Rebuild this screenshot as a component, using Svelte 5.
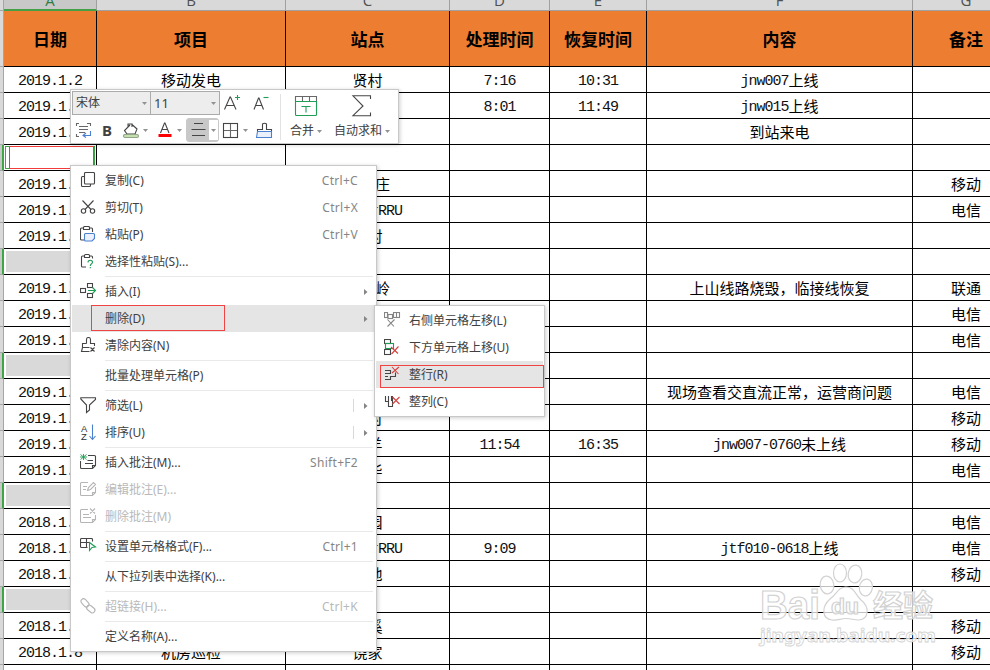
<script>
  const columns = [
    { letter: 'A', title: '日期' },
    { letter: 'B', title: '项目' },
    { letter: 'C', title: '站点' },
    { letter: 'D', title: '处理时间' },
    { letter: 'E', title: '恢复时间' },
    { letter: 'F', title: '内容' },
    { letter: 'G', title: '备注' }
  ];

  const rows = [
    ['2019.1.2', '移动发电', '贤村', '7:16', '10:31', 'jnw007上线', ''],
    ['2019.1.3', '', '', '8:01', '11:49', 'jnw015上线', ''],
    ['2019.1.3', '', '', '', '', '到站来电', ''],
    null,
    ['2019.1.4', '', '李家庄', '', '', '', '移动'],
    ['2019.1.4', '', '石家村RRU', '', '', '', '电信'],
    ['2019.1.4', '', '贤村', '', '', '', ''],
    null,
    ['2019.1.5', '', '分水岭', '', '', '上山线路烧毁，临接线恢复', '联通'],
    ['2019.1.5', '', '', '', '', '', '电信'],
    ['2019.1.5', '', '', '', '', '', '电信'],
    null,
    ['2019.1.6', '', '', '', '', '现场查看交直流正常，运营商问题', '电信'],
    ['2019.1.6', '', '上村', '', '', '', '移动'],
    ['2019.1.6', '', '青羊', '11:54', '16:35', 'jnw007-0760未上线', '移动'],
    ['2019.1.6', '', '新华', '', '', '', '电信'],
    null,
    ['2018.1.7', '', '桃园', '', '', '', '电信'],
    ['2018.1.7', '', '石家村RRU', '9:09', '', 'jtf010-0618上线', '电信'],
    ['2018.1.7', '', '基地', '', '', '', '移动'],
    null,
    ['2018.1.8', '', '兰溪', '', '', '', '移动'],
    ['2018.1.8', '机房巡检', '饶家', '', '', '', '移动'],
    ['', '', '', '', '', '', '']
  ];

  // Latin runs and Chinese runs have different advances in the sheet font.
  const runs = (s) => s.match(/[\x20-\x7e]+|[^\x20-\x7e]+/g) ?? [];

  const menu = [
    { label: '复制(C)', key: 'Ctrl+C', icon: 'copy' },
    { label: '剪切(T)', key: 'Ctrl+X', icon: 'cut' },
    { label: '粘贴(P)', key: 'Ctrl+V', icon: 'paste' },
    { label: '选择性粘贴(S)...', icon: 'special' },
    null,
    { label: '插入(I)', icon: 'insert', sub: true },
    { label: '删除(D)', sub: true, active: true },
    { label: '清除内容(N)', icon: 'clear' },
    null,
    { label: '批量处理单元格(P)' },
    null,
    { label: '筛选(L)', icon: 'filter', sub: true, split: true },
    { label: '排序(U)', icon: 'sort', sub: true, split: true },
    null,
    { label: '插入批注(M)...', key: 'Shift+F2', icon: 'note' },
    { label: '编辑批注(E)...', icon: 'editnote', off: true },
    { label: '删除批注(M)', icon: 'delnote', off: true },
    null,
    { label: '设置单元格格式(F)...', key: 'Ctrl+1', icon: 'format' },
    null,
    { label: '从下拉列表中选择(K)...' },
    null,
    { label: '超链接(H)...', key: 'Ctrl+K', icon: 'link', off: true },
    null,
    { label: '定义名称(A)...' }
  ];

  const submenu = [
    { label: '右侧单元格左移(L)', icon: 'left' },
    { label: '下方单元格上移(U)', icon: 'up' },
    { label: '整行(R)', icon: 'row', active: true },
    { label: '整列(C)', icon: 'col' }
  ];
</script>

{#snippet icon(name)}
  <svg class="ico" width="17" height="17" viewBox="0 0 17 17">
    {#if name === 'copy'}
      <path d="M4.5 4.5h-2a1 1 0 0 0-1 1v8a1 1 0 0 0 1 1h7a1 1 0 0 0 1-1v-1.500" />
      <rect x="4.500" y=".5" width="10" height="11.500" rx="1" />
    {:else if name === 'cut'}
      <path d="M2.500 1.500 11 10.500M13.500 1.500 5 10.500" />
      <circle cx="3.500" cy="12" r="2.200" /><circle cx="12.500" cy="12" r="2.200" />
    {:else if name === 'paste'}
      <path d="M3.500 2h-2a1 1 0 0 0-1 1v10a1 1 0 0 0 1 1h2.500M9.500 2h2a1 1 0 0 1 1 1v3M3.500 3.500v-2a1 1 0 0 1 1-1h4a1 1 0 0 1 1 1v2z" />
      <path class="blue pale" d="M5.500 7.500h8a1 1 0 0 1 1 1v4l-2.500 2.500H5.500a1 1 0 0 1-1-1v-5.500a1 1 0 0 1 1-1z" />
    {:else if name === 'special'}
      <path d="M4.500 3h-2a1 1 0 0 0-1 1v9a1 1 0 0 0 1 1h3.500M9.500 3h2a1 1 0 0 1 1 1v1.500M4.500 4.500V2.500a1 1 0 0 1 1-1h3a1 1 0 0 1 1 1v2z" />
      <path class="green" d="M8 9.500C8 6.500 12.500 6.700 12.500 9.200C12.500 11 10.300 10.500 10.300 13M10.300 14v1.300" />
    {:else if name === 'insert'}
      <rect x="7.500" y=".5" width="5" height="4" /><rect x=".5" y="5.500" width="5" height="4" /><rect x="7.500" y="10.500" width="5" height="4" />
      <path class="green" d="M8 7.500h7M12.500 4.500l3 3-3 3" />
    {:else if name === 'clear'}
      <path d="M6.500 6.500V2.500q0-2 2-2t2 2v4h4v2.500M6.500 6.500h-4v4h7M2.500 10.500l-1 4h8M10.500 10.500l4 4M14.500 10.500l-4 4" />
    {:else if name === 'filter'}
      <path d="M.8 1.500V.7h14.700v1.800L9.500 8v5L6.500 15.500V8L.8 2z" />
    {:else if name === 'sort'}
      <text x="1" y="7.500">A</text><text x="1" y="16">Z</text>
      <path class="blue" d="M12.500.5v15M9.500 12l3 3.500 3-3.500" />
    {:else if name === 'note'}
      <path d="M8 1.500h6.500a1 1 0 0 1 1 1v9l-3 3h-11a1 1 0 0 1-1-1V7M12.500 14v-2.500h3M7.500 6.500h5.500M5 9.500h8" />
      <path class="green thin" d="M.5.500l6 5M6.500.500l-6 5M3.500 0v6M0 3h7" />
    {:else if name === 'editnote'}
      <path d="M8 1.500H1.500a1 1 0 0 0-1 1v11a1 1 0 0 0 1 1h11l3-3V6M12.500 14v-2.500h3M3 5.500h4M3 8.500h3M7.500 9.500l1-3 5-5 2 2-5 5z" />
    {:else if name === 'delnote'}
      <path d="M8 1.500H1.500a1 1 0 0 0-1 1v11a1 1 0 0 0 1 1h11l3-3V7M12.500 14v-2.500h3M3 6.500h6M3 9.500h8M10 .5l5 5M15 .5l-5 5" />
    {:else if name === 'format'}
      <path d="M7.500 9.500h-6a1 1 0 0 1-1-1v-7a1 1 0 0 1 1-1h10a1 1 0 0 1 1 1v2M.5 4.500h9M6.500.5v9" />
      <path class="green" d="M9.500 4.500l6 4.500-3.500.5-2.500 3z" />
    {:else if name === 'link'}
      <rect x="-4.600" y="-2.600" width="9.200" height="5.200" rx="2.600" transform="translate(5 4.800) rotate(48)" />
      <rect x="-4.600" y="-2.600" width="9.200" height="5.200" rx="2.600" transform="translate(10.800 11) rotate(40)" />
    {:else if name === 'left'}
      <g class="grey"><rect x=".5" y=".5" width="3" height="5" /><rect x="4" y="2.500" width="4.500" height="4" /><rect x="9.500" y=".5" width="6" height="5" /><path d="M12.500.5v5M3.500 7.500l6.500 7M10.500 7.500l-7 7" /></g>
    {:else if name === 'up'}
      <rect x=".5" y=".5" width="6" height="4" /><rect x=".5" y="10.500" width="6" height="5" />
      <rect class="green" x="1.500" y="4.500" width="8" height="5" />
      <path class="red" d="M7 8l7 6.500M14.500 7.500l-7 7.500" />
    {:else if name === 'row'}
      <path d="M1 4.500h5.500v3H1M1 13.500h5.500v-3h5v-4M1 10.500h3" />
      <path class="red" d="M8 1l6.500 7M15 1l-7 6" />
    {:else if name === 'col'}
      <path d="M1.500 3v5.500h3V3M4.500 8.500v5h4V3M7.500 3v5" />
      <path class="red" d="M8.500 4l7 7M15.500 4l-7 7" />
    {/if}
  </svg>
{/snippet}

{#snippet drop()}
  <svg class="drop" width="5" height="3" viewBox="0 0 5 3"><path d="M0 0h5L2.500 3z" /></svg>
{/snippet}

<div class="screen">
  <div class="sheet">
    <div class="line letters">
      <div class="gutter"></div>
      {#each columns as c, i}
        <div class="letter" class:picked={i === 0}><span>{c.letter}</span></div>
      {/each}
    </div>
    <div class="line titles">
      <div class="gutter"></div>
      {#each columns as c}
        <div class="cell title">{c.title}</div>
      {/each}
    </div>
    {#each rows as row, r}
      <div class="line" class:chosen={row === null}>
        <div class="gutter"></div>
        {#if row}
          {#each row as value}
            <div class="cell">{#each runs(value) as run}<span class:latin={/[\x20-\x7e]/.test(run)}>{run}</span>{/each}</div>
          {/each}
        {:else}
          <div class="cell first" class:current={r === 3}><i></i></div>
          {#each { length: 6 } as _}
            <div class="cell"></div>
          {/each}
        {/if}
      </div>
    {/each}
  </div>

  <svg class="watermark" width="190" height="104" viewBox="0 0 190 104">
    <ellipse cx="72" cy="35" rx="6.800" ry="9" transform="rotate(-8 72 35)" />
    <ellipse cx="85" cy="23" rx="6.500" ry="9" />
    <ellipse cx="100" cy="24" rx="6.800" ry="9" transform="rotate(8 100 24)" />
    <ellipse cx="111" cy="37.500" rx="6.500" ry="8.500" transform="rotate(10 111 37)" />
    <path d="M91 37c8 0 9 7 15 13 9 7 8 19-2 20-6 0-7-1.500-13-1.500s-8 2.500-14 1.500c-10-1-11-13-2-21 7-5 8-12 16-12z" />
    <text x="5" y="68.500" font-size="40" textLength="60" lengthAdjust="spacingAndGlyphs">Bai</text>
    <text x="76" y="64" font-size="22" textLength="28" lengthAdjust="spacingAndGlyphs">du</text>
    <text class="cn" x="118" y="66" font-size="30" textLength="60">经验</text>
    <text class="site" x="5" y="92" font-size="18" textLength="176" lengthAdjust="spacingAndGlyphs">jingyan.baidu.com</text>
  </svg>

  <div class="toolbar">
    <div class="tools">
      <div class="upper">
        <div class="combo name"><span>宋体</span>{@render drop()}</div>
        <div class="combo size"><span>11</span>{@render drop()}</div>
        <svg width="18" height="18" viewBox="0 0 18 18"><path d="M1.500 15.500 7 3h.500L13 15.500M3.500 11.500h7.500" /><path class="green" d="M12 3.500h5M14.500 1v5" /></svg>
        <svg class="smaller" width="17" height="18" viewBox="0 0 17 18"><path d="M1 15.500 5.500 4h.500L10.500 15.500M3 11.500h6" /><path class="green" d="M10.500 3.500h5" /></svg>
      </div>
      <div class="lower">
        <svg width="17" height="16" viewBox="0 0 17 16"><path class="soft" d="M4 1.500H1.500V4M12 1.500h3.500V4M4 14.500H1.500V12M4 4.500h9M4 7.500h9M4 10.500h6" /><path class="blue" d="M15.500 9v4.500H9M11 11l-3 2.500 3 2" /></svg>
        <b>B</b>
        <svg class="bucket" width="17" height="17" viewBox="0 0 17 17"><path d="M5 5.500V2h4v3M9 2.500l5 4.500-2 5H4L1.500 8.500 7 3M2 8.500h-1" /><rect class="pool" x=".5" y="12.500" width="15" height="3" rx="1.500" /></svg>
        {@render drop()}
        <svg class="color" width="14" height="16" viewBox="0 0 14 16"><path d="M2.500 11 6.500 1h.500L11 11M4 7.500h6" /><path class="ink" d="M.5 13.500h13" /></svg>
        {@render drop()}
        <div class="align">
          <svg width="22" height="20" viewBox="0 0 22 20"><path d="M7 3.500h9M4.500 9.500h14M5 15.500h13" /></svg>
          <div>{@render drop()}</div>
        </div>
        <svg class="borders" width="17" height="17" viewBox="0 0 17 17"><rect x="1.500" y="1.500" width="14" height="14" /><path class="soft" d="M8.500 2v13M2 8.500h13" /></svg>
        {@render drop()}
        <svg class="brush" width="17" height="17" viewBox="0 0 17 17"><path d="M1.500 9V7.500h5V2q2-1.500 4 0v5.500h5V9" /><path class="blue pale" d="M1.500 9.500h14v6H.5z" /></svg>
      </div>
    </div>
    <div class="rule"></div>
    <div class="big merge">
      <svg width="24" height="22" viewBox="0 0 24 22"><path class="soft" d="M1.500 1.500h21v5h-21zM8.500 2v4M15.500 2v4" /><path class="green" d="M1.500 6.500h21v13a1 1 0 0 1-1 1h-19a1 1 0 0 1-1-1zM7.500 11.500h9M12 11.500v6" /></svg>
      <div><span>合并</span>{@render drop()}</div>
    </div>
    <div class="big sum">
      <svg width="22" height="22" viewBox="0 0 22 22"><path d="M19.500 4V.8H2L12 11 2 20.700h17.500V17.500" /></svg>
      <div><span>自动求和</span>{@render drop()}</div>
    </div>
  </div>

  <div class="menu main">
    {#each menu as item}
      {#if item}
        <div class="item" class:active={item.active} class:off={item.off}>
          {#if item.icon}{@render icon(item.icon)}{:else}<div class="ico"></div>{/if}
          <span class="label">{item.label}</span>
          {#if item.key}<span class="key">{item.key}</span>{/if}
          {#if item.sub}<div class="more" class:split={item.split}><svg width="4" height="6" viewBox="0 0 4 6"><path d="M0 0l3.500 3L0 6z" /></svg></div>{/if}
          {#if item.active}<div class="frame"></div>{/if}
        </div>
      {:else}
        <div class="sep"></div>
      {/if}
    {/each}
  </div>

  <div class="menu sub">
    {#each submenu as item}
      <div class="item" class:active={item.active}>
        {@render icon(item.icon)}
        <span class="label">{item.label}</span>
        {#if item.active}<div class="frame"></div>{/if}
      </div>
    {/each}
  </div>
</div>

<style>
  .screen {
    position: relative;
    width: 990px;
    height: 670px;
    overflow: hidden;
    background: #fff;
    color: #000;
  }
  .sheet { width: 1020px; }
  .line {
    display: grid;
    grid-template-columns: 4px 93px 189px 164px 100px 97px 266px 107px;
    grid-template-rows: 100%;
    height: 26px;
  }
  .gutter {
    box-sizing: border-box;
    background: #d9d9d9;
    border-right: 1px solid #a6a6a6;
    border-bottom: 1px solid #a6a6a6;
  }
  .letters { height: 11px; }
  .letter {
    box-sizing: border-box;
    height: 11px;
    overflow: hidden;
    background: #d9d9d9;
    border-right: 1px solid #a0a0a0;
    border-bottom: 1px solid #a0a0a0;
    display: flex;
    justify-content: center;
    align-items: flex-end;
    font: 15px/15px "Open Sans", sans-serif;
    color: #505050;
  }
  .letter span { margin-bottom: 2px; }
  .letter.picked { background: #c8c8c8; border-bottom: 2px solid #43a047; color: #2f7d46; }
  .letter.picked span { margin-bottom: 1px; }
  .titles { height: 56px; }
  .cell {
    box-sizing: border-box;
    border-right: 1px solid #000;
    border-bottom: 1px solid #000;
    display: flex;
    justify-content: center;
    align-items: center;
    font: 15px/20px "Noto Sans CJK SC", sans-serif;
    white-space: nowrap;
  }
  .latin { font-family: "Liberation Mono", monospace; line-height: 18px; letter-spacing: -1px; padding-top: 4px; color: #111; }
  .title { background: #ed7d31; font-weight: 700; font-size: 17px; line-height: 24px; }
  .chosen .gutter { border-right: 2px solid #3fa648; background: #c8c8c8; }
  .first { padding: 2px; align-items: stretch; }
  .first i { flex: 1; background: #d9d9d9; }
  .current { padding: 1px; }
  .current i { background: #fff; border: 1px solid #3fa648; position: relative; }
  .current i::after {
    content: "";
    position: absolute;
    left: 3px;
    top: -1px;
    width: 83px;
    height: 21px;
    border: 1px solid #f23c3c;
  }

  .watermark {
    position: absolute;
    left: 755px;
    top: 550px;
    fill: #fff;
    fill-opacity: .75;
    stroke: #d2d2d2;
    stroke-width: 1.2px;
    font-family: "Liberation Sans", sans-serif;
    font-weight: 700;
  }
  .cn { font-family: "Noto Sans CJK SC", sans-serif; }
  .site { font-family: "Noto Sans", sans-serif; stroke-width: .8px; }

  svg { fill: none; stroke: #454545; stroke-width: 1.1px; flex: none; }
  .green { stroke: #1f9d55; }
  .thin { stroke-width: .9px; }
  .blue { stroke: #4b80cf; }
  .pale { fill: #eaf1fd; }
  .red { stroke: #d64040; }
  .grey { stroke: #858585; }
  .soft { stroke: #686868; }
  .drop { fill: #929292; stroke: none; }

  .toolbar, .menu {
    position: absolute;
    box-sizing: border-box;
    background: #fff;
    border: 1px solid #c8c8c8;
    box-shadow: 1px 1px 4px rgba(0, 0, 0, .2);
    font: 12px/18px "Noto Sans", "Noto Sans CJK SC", sans-serif;
    color: #404040;
  }
  .toolbar { left: 70px; top: 89px; width: 329px; height: 55px; display: flex; }
  .tools { width: 209px; padding: 1px; box-sizing: border-box; }
  .upper, .lower { display: flex; align-items: center; }
  .upper { height: 24px; }
  .combo {
    box-sizing: border-box;
    height: 24px;
    border: 1px solid #ababab;
    background: #ededed;
    display: flex;
    align-items: center;
    justify-content: space-between;
    padding: 0 3px;
  }
  .name { width: 79px; }
  .size { width: 70px; margin-left: -1px; margin-right: 3px; }
  .size span { font-size: 13px; }
  .smaller { margin-left: 12px; }
  .lower { height: 30px; padding-left: 3px; }
  .lower b { font-size: 15px; margin-left: 10px; width: 11px; }
  .bucket { margin: 0 3px 0 10px; }
  .color { margin: 0 5px 0 10px; }
  .align {
    box-sizing: border-box;
    width: 33px;
    height: 24px;
    margin: 0 4px 0 4px;
    border: 1px solid #c8c8c8;
    border-radius: 3px;
    background: #c8c8c8;
    display: flex;
    align-items: center;
  }
  .align div { flex: 1; height: 20px; background: #fff; display: flex; align-items: center; justify-content: center; }
  .borders { margin-left: -1px; margin-right: 4px; }
  .brush { margin-left: 8px; }
  .pool { fill: #c5dfb2; stroke: #8fa883; }
  .ink { stroke: #f00; stroke-width: 3; }
  .rule { width: 1px; height: 46px; margin-top: 4px; background: #e2e2e2; }
  .big { display: flex; flex-direction: column; align-items: center; padding-top: 5px; }
  .big > div { display: flex; align-items: center; gap: 3px; margin-top: 5px; white-space: nowrap; }
  .merge { margin-left: 9px; }
  .sum { margin-left: 12px; }

  .menu { padding: 1px; }
  .main { left: 70px; top: 165px; width: 307px; height: 487px; }
  .sub { left: 374px; top: 305px; width: 171px; height: 112px; }
  .item {
    position: relative;
    height: 27px;
    display: flex;
    align-items: center;
    padding-left: 8px;
    white-space: nowrap;
  }
  .ico { width: 17px; height: 17px; margin-right: 8px; }
  .ico text { font: 9.500px "Liberation Sans", sans-serif; fill: #303030; stroke: none; }
  .key { margin-left: auto; margin-right: 17px; color: #858585; letter-spacing: .3px; }
  .active { background: #e5e5e5; }
  .off { color: #b9b9b9; }
  .off .key { color: #b9b9b9; }
  .off svg { stroke: #b5b5b5; }
  .more { margin-left: auto; width: 22px; height: 13px; display: flex; align-items: center; box-sizing: border-box; justify-content: flex-end; padding-right: 7px; }
  .split { border-left: 1px solid #d9d9d9; }
  .more svg { fill: #858585; stroke: none; }
  .sep { height: 1px; margin: 1px 2px 1px 33px; background: #e9e9e9; }
  .frame { position: absolute; box-sizing: border-box; border: 1px solid #f04444; }
  .main .frame { left: 19px; top: 0; width: 134px; height: 26px; }
  .sub .frame { left: 4px; top: 4px; width: 164px; height: 23px; }
</style>
